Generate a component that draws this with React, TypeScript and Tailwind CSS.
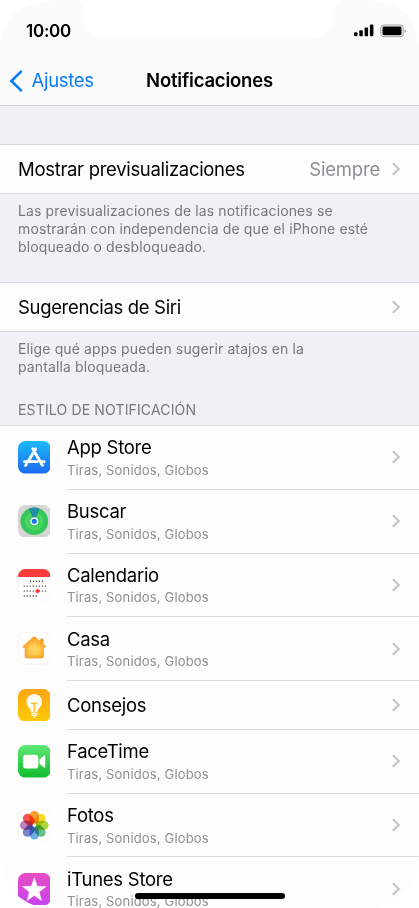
import React from "react";

const PETALS = [
  "#fa9c2a",
  "#f1dc2a",
  "#b0d43e",
  "#64c08a",
  "#6cafe4",
  "#7782c8",
  "#bd80be",
  "#f2554b",
];

const AppStoreIcon = () => (
  <svg width="32.6" height="32.6" viewBox="0 0 33 33">
    <defs>
      <linearGradient id="appstore" x1="0" y1="0" x2="0" y2="1">
        <stop offset="0" stopColor="#1cb9f8" />
        <stop offset="1" stopColor="#1b6bef" />
      </linearGradient>
    </defs>
    <rect width="33" height="33" rx="7.5" fill="url(#appstore)" />
    <g stroke="#fff" strokeWidth="3" strokeLinecap="round">
      <path d="M17.8 8 9.9 21.2M15 8 24.7 24.6M6.6 20.9h12.6M23.8 20.9h2.6M8.3 23.8l-.5.9" />
    </g>
    <path d="M14.8 11.8 19.8 20" stroke="#2a8df2" strokeWidth=".5" />
  </svg>
);

const BuscarIcon = () => (
  <svg width="32.6" height="32.6" viewBox="0 0 33 33">
    <rect width="33" height="33" rx="7.5" fill="#d5d5d5" />
    <circle cx="16.5" cy="16.5" r="14" fill="#35c759" />
    <circle cx="16.5" cy="16.5" r="9.2" fill="#4bd565" />
    <circle cx="16.5" cy="16.5" r="6" fill="#3bcb5d" />
    <path d="M16.5 16.5 11 3.7a14 14 0 0 1 11 0Z" fill="#218fa0" />
    <circle cx="16.5" cy="16.5" r="4" fill="#fff" />
    <circle cx="16.5" cy="16.5" r="2.6" fill="#1674ea" />
  </svg>
);

const CalendarioIcon = () => (
  <svg width="32.6" height="32.6" viewBox="0 0 33 33">
    <rect x=".4" y=".4" width="32.2" height="32.2" rx="7.2" fill="#fff" stroke="#f0f0f0" strokeWidth=".8" />
    <path d="M0 8V7.5A7.5 7.5 0 0 1 7.5 0h18A7.5 7.5 0 0 1 33 7.5V8Z" fill="#fc3d39" />
    <g stroke="#222" strokeWidth="1.4" strokeLinecap="round" strokeDasharray="0 3.05">
      <path d="M12.6 12.4h15" />
      <path d="M6.3 17.3h21.5" />
      <path d="M6.3 22.4h21.5" />
      <path d="M6.3 27.4h14" />
    </g>
    <circle cx="19.8" cy="22.4" r="2.1" fill="#fc3d39" />
  </svg>
);

const CasaIcon = () => (
  <svg width="32.6" height="32.6" viewBox="0 0 33 33">
    <defs>
      <radialGradient id="casa" cx=".5" cy=".6" r=".6">
        <stop offset="0" stopColor="#ffdc68" />
        <stop offset="1" stopColor="#fb9a1c" />
      </radialGradient>
    </defs>
    <rect x=".4" y=".4" width="32.2" height="32.2" rx="7.2" fill="#fff" stroke="#f0f0f0" strokeWidth=".8" />
    <path
      d="M15.6 5.2a1.3 1.3 0 0 1 1.7 0L22.7 10V7.8q0-.8.8-.8h1.2q.8 0 .8.8v4.6l2.2 2q.6.9-.5 1.1h-1.5v9.3q0 1.5-1.5 1.5H8.7q-1.5 0-1.5-1.5v-9.3H5.6q-1.2-.2-.4-1.1Z"
      fill="url(#casa)"
      stroke="#f78d17"
      strokeWidth=".7"
    />
    <path d="M16.5 10.5 10.5 16v7h12v-7Z" fill="#ffd45a" fillOpacity=".45" />
  </svg>
);

const ConsejosIcon = () => (
  <svg width="32.6" height="32.6" viewBox="0 0 33 33">
    <defs>
      <linearGradient id="consejos" x1="0" y1="0" x2="0" y2="1">
        <stop offset="0" stopColor="#fea512" />
        <stop offset="1" stopColor="#fdca08" />
      </linearGradient>
    </defs>
    <rect width="33" height="33" rx="7.5" fill="url(#consejos)" />
    <path
      d="M16.5 5a7.8 7.8 0 0 0-7.9 7.9c0 5 4.3 6.5 4.8 10.6h6.2c.5-4.1 4.8-5.6 4.8-10.6A7.8 7.8 0 0 0 16.5 5Z"
      fill="#fffaf0"
    />
    <path d="M13.4 14.5h6.2M16.5 14.5v8.6" stroke="#fcb826" strokeWidth="1.3" />
    <path d="M13.8 24.8h5.4M14.2 26.8h4.6" stroke="#fffaf0" strokeWidth="1.3" strokeLinecap="round" />
    <path d="M14.7 28h3.6q-.6 1-1.8 1t-1.8-1Z" fill="#fffaf0" />
  </svg>
);

const FaceTimeIcon = () => (
  <svg width="32.6" height="32.6" viewBox="0 0 33 33">
    <defs>
      <linearGradient id="facetime" x1="0" y1="0" x2="0" y2="1">
        <stop offset="0" stopColor="#5ee775" />
        <stop offset="1" stopColor="#12bd2c" />
      </linearGradient>
    </defs>
    <rect width="33" height="33" rx="7.5" fill="url(#facetime)" />
    <rect x="5" y="9.8" width="15.6" height="14" rx="3.4" fill="#fff" />
    <path d="M21.8 14.7 26 11q1.6-1.1 1.6.5v10.6q0 1.6-1.6.5l-4.2-3.7Z" fill="#fff" />
  </svg>
);

const FotosIcon = () => (
  <svg width="32.6" height="32.6" viewBox="0 0 33 33">
    <rect x=".4" y=".4" width="32.2" height="32.2" rx="7.2" fill="#fff" stroke="#f0f0f0" strokeWidth=".8" />
    {PETALS.map((color, i) => (
      <rect
        key={color}
        x="11.9"
        y="2"
        width="9.2"
        height="13"
        rx="4.6"
        fill={color}
        className="mix-blend-multiply"
        transform={`rotate(${i * 45} 16.5 16.5)`}
      />
    ))}
    <circle cx="16.5" cy="16.5" r="1.3" fill="#fff" />
  </svg>
);

const ItunesIcon = () => (
  <svg width="32.6" height="32.6" viewBox="0 0 33 33">
    <defs>
      <linearGradient id="itunes" x1="0" y1="0" x2="0" y2="1">
        <stop offset="0" stopColor="#ea4bc2" />
        <stop offset="1" stopColor="#c544ee" />
      </linearGradient>
    </defs>
    <rect width="33" height="33" rx="7.5" fill="url(#itunes)" />
    <path
      d="m16.5 4.8 3 8.6 8.9.3-7 5.5 2.4 8.6-7.3-5-7.3 5 2.4-8.6-7-5.5 8.9-.3Z"
      fill="#fff"
      stroke="#fff"
      strokeWidth=".5"
      strokeLinejoin="round"
    />
  </svg>
);

const Chevron = () => (
  <svg className="shrink-0" width="9" height="14" viewBox="0 0 9 14" fill="none">
    <path d="m.9 1.2 6 5.8-6 5.8" stroke="#c3c3c6" strokeWidth="1.9" />
  </svg>
);

const apps = [
  { name: "App Store", icon: AppStoreIcon, detail: true },
  { name: "Buscar", icon: BuscarIcon, detail: true },
  { name: "Calendario", icon: CalendarioIcon, detail: true },
  { name: "Casa", icon: CasaIcon, detail: true },
  { name: "Consejos", icon: ConsejosIcon, detail: false },
  { name: "FaceTime", icon: FaceTimeIcon, detail: true },
  { name: "Fotos", icon: FotosIcon, detail: true },
  { name: "iTunes Store", icon: ItunesIcon, detail: true },
];

const StatusBar = () => (
  <div className="flex h-[61px] items-center justify-between pl-[26px] pr-[12px]">
    <span className="text-[17px] font-semibold leading-5 tracking-[-0.25px]">10:00</span>
    <div className="flex items-center gap-[6px]">
      <svg width="20" height="13" viewBox="0 0 20 13">
        <rect x="0" y="8.3" width="3.5" height="4" rx="1" />
        <rect x="5.3" y="6.3" width="3.5" height="6" rx="1" />
        <rect x="10.6" y="3.5" width="3.5" height="8.8" rx="1" />
        <rect x="15.9" y=".5" width="3.5" height="11.8" rx="1" />
      </svg>
      <svg width="27" height="14" viewBox="0 0 27 14">
        <rect x=".8" y="1" width="22.4" height="11.8" rx="3.2" fill="none" stroke="#a5a5a5" strokeWidth="1.1" />
        <rect x="2.5" y="2.6" width="19" height="8.6" rx="1.4" />
        <path d="M24.6 5v4q1.4-.5 1.4-2t-1.4-2Z" fill="#a5a5a5" />
      </svg>
    </div>
  </div>
);

const App = () => {
  return (
    <div className="relative flex h-[908px] w-[419px] flex-col overflow-hidden bg-[#f0f0f5] font-['Inter',sans-serif] text-black">
      <header className="h-[106px] shrink-0 border-b border-[#cfcfd4] bg-[#fbfbfb]">
        <StatusBar />
        <div className="grid h-[39px] grid-cols-[1fr_auto_1fr] items-center">
          <div className="flex items-center gap-[8.5px] pl-[9px] text-[#0a7aff]">
            <svg width="14" height="22" viewBox="0 0 14 22" fill="none">
              <path d="M12 1.6 2.4 11l9.6 9.4" stroke="currentColor" strokeWidth="2.6" strokeLinecap="round" />
            </svg>
            <span className="pb-px text-[18.5px] leading-6 tracking-[-0.3px]">Ajustes</span>
          </div>
          <h1 className="pb-px text-[18.5px] font-semibold leading-6 tracking-[-0.2px]">Notificaciones</h1>
          <span />
        </div>
      </header>

      <div className="mt-[38px] flex h-[50px] shrink-0 items-center border-y border-[#dcdce0] bg-[#fdfdfd] px-[18px]">
        <span className="flex-1 text-[18.5px] leading-6 tracking-[-0.31px]">Mostrar previsualizaciones</span>
        <span className="mr-3 text-[18.5px] leading-6 tracking-[-0.2px] text-[#8e8e93]">Siempre</span>
        <Chevron />
      </div>
      <p className="h-[88px] shrink-0 px-[18px] pt-2 text-[14px] leading-[18px] tracking-[0.125px] text-[#77777c]">
        Las previsualizaciones de las notificaciones se
        <br />
        mostrarán con independencia de que el iPhone esté
        <br />
        bloqueado o desbloqueado.
      </p>

      <div className="flex h-[50px] shrink-0 items-center border-y border-[#dcdce0] bg-[#fdfdfd] px-[18px]">
        <span className="flex-1 text-[18.5px] leading-6 tracking-[-0.33px]">Sugerencias de Siri</span>
        <Chevron />
      </div>
      <p className="h-[69px] shrink-0 px-[18px] pt-2 text-[14px] leading-[18px] tracking-[0.125px] text-[#77777c]">
        Elige qué apps pueden sugerir atajos en la
        <br />
        pantalla bloqueada.
      </p>
      <h2 className="h-6 shrink-0 px-[18px] text-[14px] leading-[18px] tracking-[0.15px] text-[#77777c]">
        ESTILO DE NOTIFICACIÓN
      </h2>

      <ul className="shrink-0 border-t border-[#dcdce0] bg-[#fdfdfd]">
        {apps.map(({ name, icon: Icon, detail }) => (
          <li key={name} className="flex items-center pl-[17.8px]">
            <div className="mb-px shrink-0">
              <Icon />
            </div>
            <div
              className={`ml-[16.6px] flex flex-1 items-center border-b border-[#dedee1] pr-[18px] ${detail ? "h-[63.8px]" : "h-[48.7px]"}`}
            >
              <div className="flex-1">
                <div className="pt-[0.4px] text-[18.5px] leading-[23px] tracking-[-0.27px]">{name}</div>
                {detail && (
                  <div className="mt-[1.6px] text-[13px] leading-[18px] tracking-[0.16px] text-[#8e8e93]">
                    Tiras, Sonidos, Globos
                  </div>
                )}
              </div>
              <Chevron />
            </div>
          </li>
        ))}
      </ul>

      {/* notch, screen corners and home indicator */}
      <svg className="pointer-events-none absolute inset-0" width="419" height="908" viewBox="0 0 419 908" fill="#fff">
        <path d="M0 0H60C24 1 2 15 0 46Z" />
        <path d="M419 0H365C398 1 417 15 419 46Z" />
        <path d="M77 0q7 2 7 13c0 16 9 25 25 25H310c16 0 25-9 25-25q0-11 7-13Z" />
        <path d="M0 858C2 879 9 891 22 899Q31 905 42 908H0Z" />
        <path d="M419 858C417 879 410 891 397 899Q388 905 377 908H419Z" />
      </svg>
      <div className="absolute left-[135px] top-[893px] h-[6px] w-[150px] rounded-full bg-black" />
    </div>
  );
};

export default App;
